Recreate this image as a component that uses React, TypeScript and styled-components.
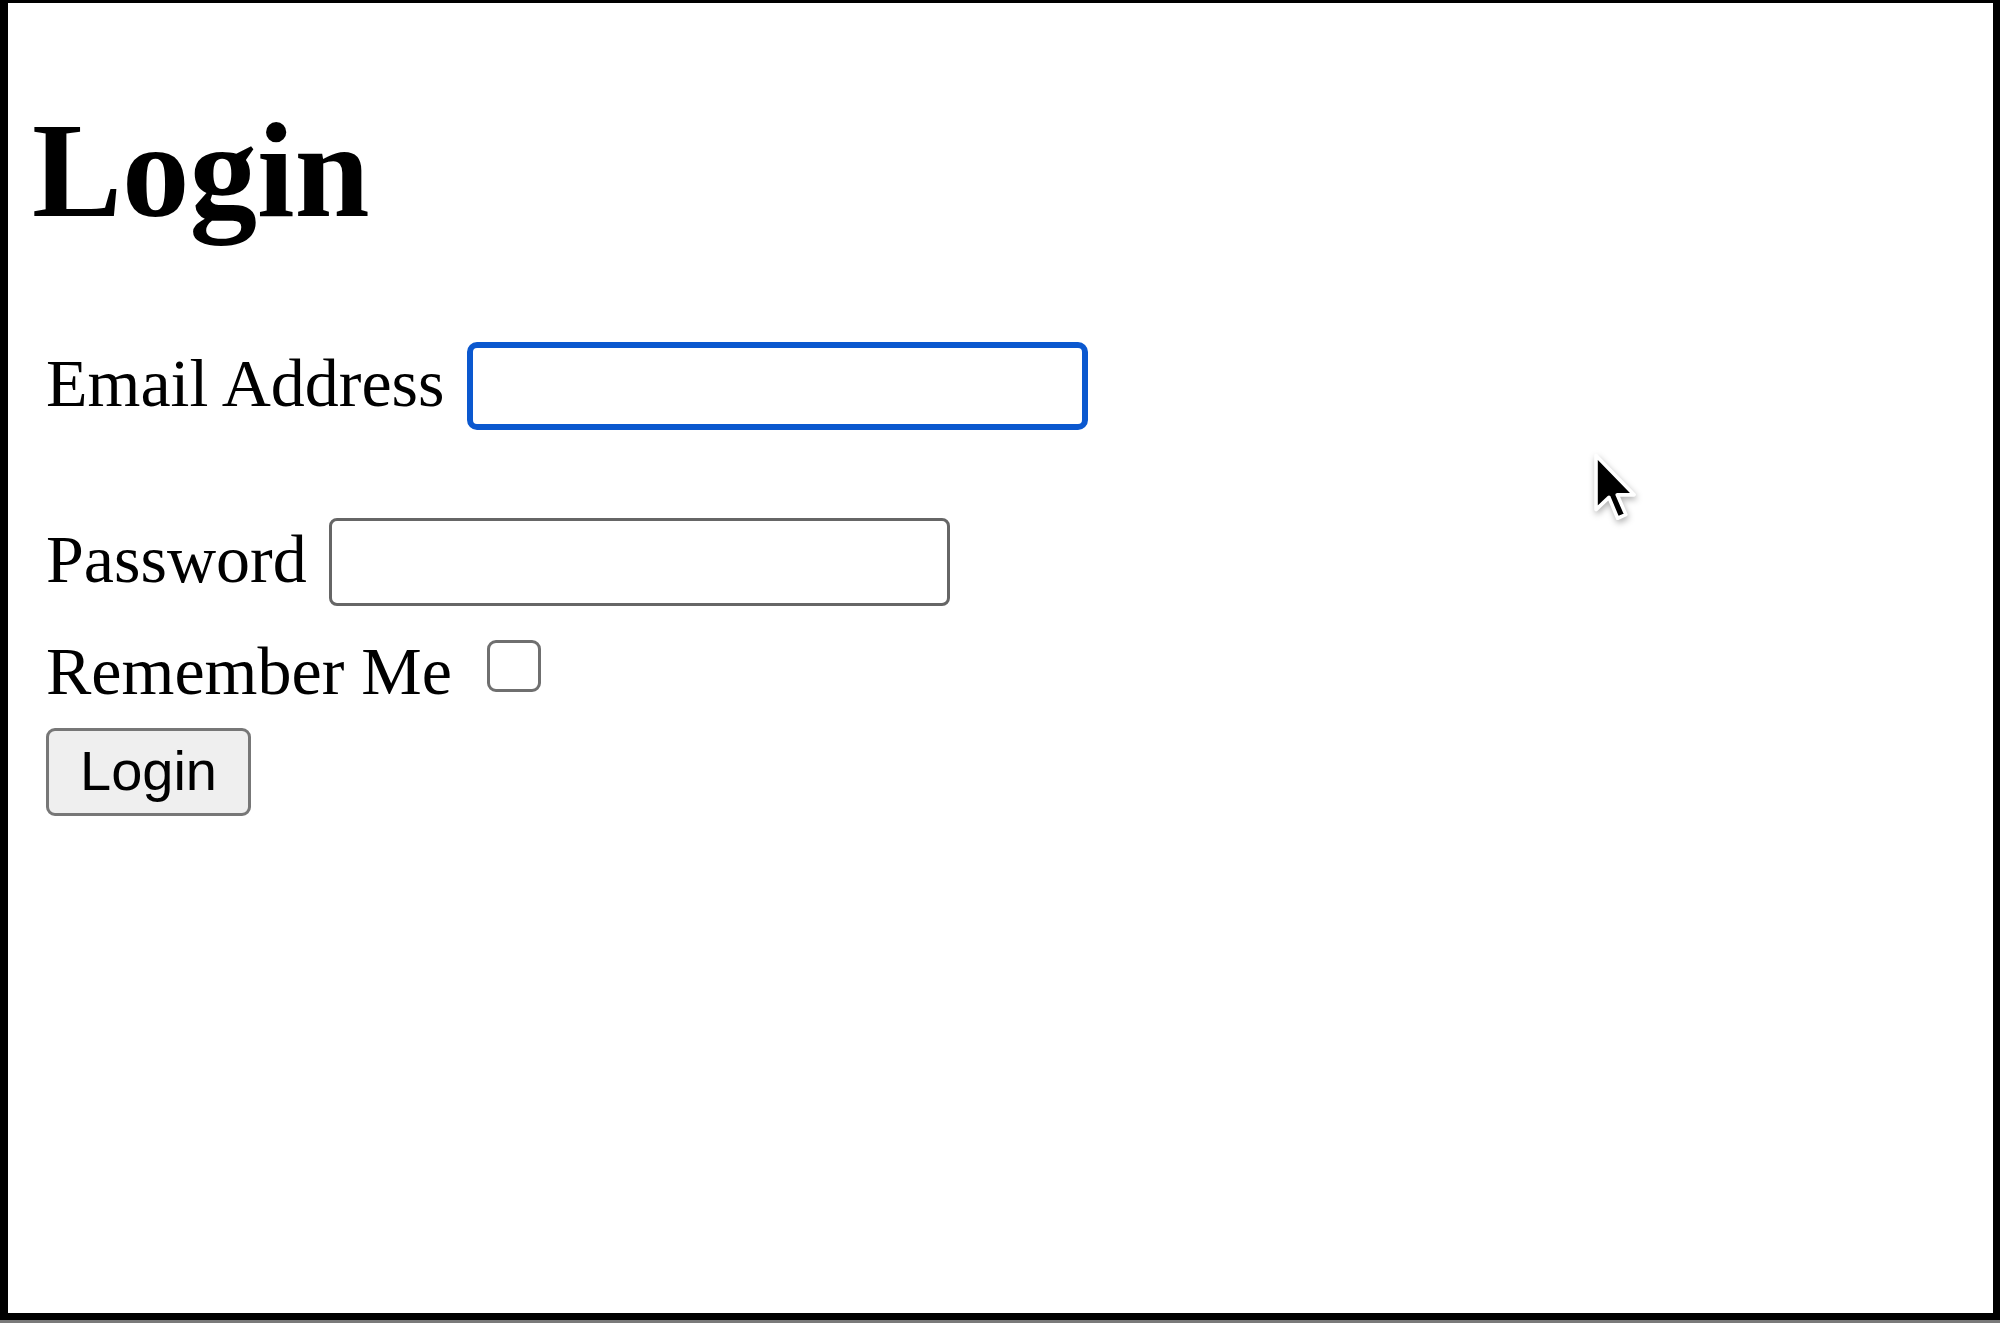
import styled, { createGlobalStyle } from "styled-components";

const GlobalStyle = createGlobalStyle`
  html, body {
    margin: 0;
    padding: 0;
    background-color: #ffffff;
  }
  * {
    box-sizing: border-box;
  }
`;

const Screen = styled.div`
  width: 2000px;
  height: 1323px;
  padding-bottom: 3px;
  background-color: #7a7a7a;
`;

const Frame = styled.div`
  position: relative;
  height: 100%;
  border-style: solid;
  border-color: #000000;
  border-width: 3px 7px 7px 8px;
  background-color: #ffffff;
  padding: 0 0 0 24px;
  font-family: "Liberation Serif", "Times New Roman", serif;
  color: #000000;
`;

const Title = styled.h1`
  margin: 100px 0 104px;
  font-size: 135px;
  line-height: 1;
  font-weight: bold;
`;

const Form = styled.form`
  display: flex;
  flex-direction: column;
  align-items: flex-start;
  margin-left: 14px;
`;

const Row = styled.div<{ $top?: number; $align?: string }>`
  display: flex;
  align-items: ${(p) => p.$align || "center"};
  margin-top: ${(p) => p.$top || 0}px;
`;

const Label = styled.label<{ $gap: number; $lift?: number }>`
  font-size: 68px;
  line-height: 1;
  margin-right: ${(p) => p.$gap}px;
  margin-bottom: ${(p) => p.$lift || 0}px;
`;

const Input = styled.input<{ $focused?: boolean }>`
  width: 621px;
  height: 88px;
  margin: 0;
  padding: 0 12px;
  font-size: 56px;
  background: #ffffff;
  border: ${(p) => (p.$focused ? "6px solid #0b58cf" : "3px solid #666666")};
  border-radius: ${(p) => (p.$focused ? "10px" : "8px")};
  outline: none;
`;

const Check = styled.span`
  display: block;
  width: 54px;
  height: 52px;
  margin-top: 3px;
  border: 3px solid #6f6f6f;
  border-radius: 9px;
  background: #ffffff;
`;

const Button = styled.button`
  margin-top: 23px;
  width: 205px;
  height: 88px;
  padding: 0 0 4px;
  font-family: "Liberation Sans", Arial, sans-serif;
  font-size: 56px;
  color: #000000;
  background-color: #efefef;
  border: 3px solid #777777;
  border-radius: 9px;
`;

const Pointer = styled.svg`
  position: absolute;
  left: 1584px;
  top: 449px;
  width: 44px;
  height: 72px;
  filter: drop-shadow(1px 3px 3px rgba(0, 0, 0, 0.3));
`;

export default function App() {
  return (
    <Screen>
      <GlobalStyle />
      <Frame>
        <Title>Login</Title>
        <Form onSubmit={(e) => e.preventDefault()}>
          <Row>
            <Label $gap={22} $lift={6}>Email Address</Label>
            <Input type="email" $focused />
          </Row>
          <Row $top={88}>
            <Label $gap={22} $lift={6}>Password</Label>
            <Input type="password" />
          </Row>
          <Row $top={31} $align="flex-start">
            <Label $gap={35}>Remember Me</Label>
            <Check />
          </Row>
          <Button type="submit">Login</Button>
        </Form>
        <Pointer viewBox="0 0 12 20">
          <path
            d="M1 1 L1 16 L4.6 12.6 L7 18.4 L9.3 17.4 L6.9 11.9 L11.6 11.9 Z"
            fill="#000000"
            stroke="#ffffff"
            strokeWidth="1"
            strokeLinejoin="round"
          />
        </Pointer>
      </Frame>
    </Screen>
  );
}
